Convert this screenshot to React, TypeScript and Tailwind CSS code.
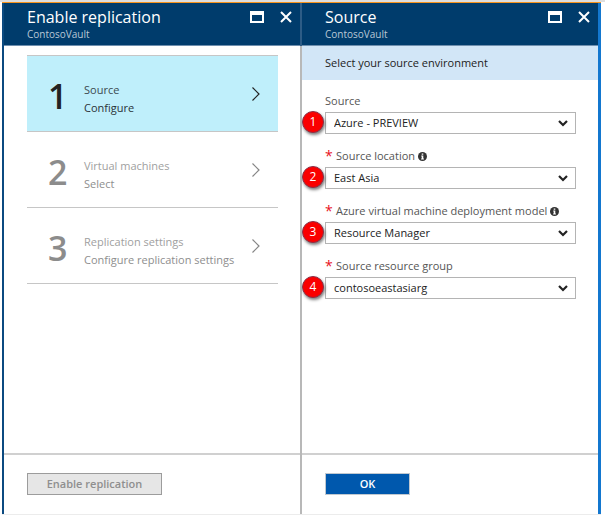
import type { ReactNode } from "react";

type Step = { number: number; title: string; detail: string; active?: boolean };
type Field = { id: string; label: string; value: string; required?: boolean; info?: boolean };

const steps: Step[] = [
  { number: 1, title: "Source", detail: "Configure", active: true },
  { number: 2, title: "Virtual machines", detail: "Select" },
  { number: 3, title: "Replication settings", detail: "Configure replication settings" },
];

const fields: Field[] = [
  { id: "source", label: "Source", value: "Azure - PREVIEW" },
  { id: "location", label: "Source location", value: "East Asia", required: true, info: true },
  {
    id: "model",
    label: "Azure virtual machine deployment model",
    value: "Resource Manager",
    required: true,
    info: true,
  },
  { id: "group", label: "Source resource group", value: "contosoeastasiarg", required: true },
];

function BladeHeader({ title }: { title: string }) {
  return (
    <header className="flex h-[43px] items-start justify-between border-b border-[#6f8fae] bg-[#003c6c] pr-2 pl-[23px]">
      <div className="pt-1">
        <h2 className="text-base leading-5 text-white">{title}</h2>
        <p className="text-[10px] leading-[14px] text-[#b9c8d6]">ContosoVault</p>
      </div>
      <div className="flex items-center gap-4 pt-2">
        <button type="button" aria-label="Maximize">
          <svg width="14" height="12" viewBox="0 0 14 12" className="block">
            <path d="M0 0h14v12H0zM2 4v6h10V4z" fill="#fff" fillRule="evenodd" />
          </svg>
        </button>
        <button type="button" aria-label="Close">
          <svg width="12" height="12" viewBox="0 0 12 12" className="block">
            <path d="M1 1l10 10M11 1L1 11" stroke="#fff" strokeWidth="2" />
          </svg>
        </button>
      </div>
    </header>
  );
}

function BladeFooter({ children }: { children: ReactNode }) {
  return (
    <footer className="mt-auto h-[61px] border-t-2 border-t-[#d0d0d0] pt-[18px] pl-[23px]">
      {children}
    </footer>
  );
}

function StepRow({ step }: { step: Step }) {
  return (
    <li className="border-b border-[#c6c6c6]">
      <button
        type="button"
        className={`flex h-[75px] w-full items-center pr-[18px] pl-[21px] text-left ${
          step.active ? "bg-[#bfeffb] text-[#3c4a50]" : "text-[#a0a0a0]"
        }`}
      >
        <span
          className={`w-9 pt-1 text-[34px] leading-10 font-semibold ${
            step.active ? "text-[#222222]" : "text-[#8c8c8c]"
          }`}
        >
          {step.number}
        </span>
        <span className="flex-1 pt-[10px] text-[11px] leading-[18px]">
          <span className="block">{step.title}</span>
          <span className={`block ${step.active ? "text-[#2a3438]" : "text-[#8e8e8e]"}`}>
            {step.detail}
          </span>
        </span>
        <svg width="8" height="14" viewBox="0 0 8 14" fill="none">
          <path
            d="M0.5 0.5L7 7L0.5 13.5"
            stroke={step.active ? "#222" : "#858585"}
            strokeWidth="1.2"
          />
        </svg>
      </button>
    </li>
  );
}

function InfoIcon() {
  return (
    <svg width="9" height="9" viewBox="0 0 9 9" role="img" aria-label="Information">
      <circle cx="4.5" cy="4.5" r="4.5" fill="#333" />
      <path d="M3.7 1.4h1.6v1.3H3.7zM3.2 3.5h2.1v3h.6v.9H3.1v-.9h.6V4.4h-.5z" fill="#fff" />
    </svg>
  );
}

function SelectField({ field, badge }: { field: Field; badge: number }) {
  return (
    <div>
      <div className="flex h-4 items-center gap-[3px] text-[11px] text-[#555555]">
        <label htmlFor={field.id} className="flex items-center gap-[3px]">
          {field.required && <span className="w-2 text-sm leading-4 text-[#e81123]">*</span>}
          {field.label}
        </label>
        {field.info && <InfoIcon />}
      </div>
      <div className="relative mt-[3px]">
        <select
          id={field.id}
          className="block h-[22px] w-full appearance-none border border-[#b4b4b4] bg-white pl-2 text-[11px] text-[#222222]"
        >
          <option>{field.value}</option>
        </select>
        <svg
          width="10"
          height="7"
          viewBox="0 0 10 7"
          fill="none"
          className="pointer-events-none absolute top-2 right-2"
        >
          <path d="M1 1L5 5L9 1" stroke="#222" strokeWidth="2.2" />
        </svg>
        <span className="absolute -top-px -left-[23px] flex size-[22px] items-center justify-center rounded-full border border-[#8d3048] bg-[#fa0000] text-[12px] leading-4 text-white shadow-[1px_2px_3px_rgba(0,0,0,0.5)]">
          {badge}
        </span>
      </div>
    </div>
  );
}

export default function App() {
  return (
    <div className="flex min-h-screen flex-col bg-white pb-[5px] font-['Open_Sans','Noto_Sans',sans-serif]">
      <div className="h-0.5 bg-[#dedede]" />
      <div className="mr-1 ml-0.5 flex flex-1 flex-col border-t border-b border-t-[#f7941d] border-b-[#ececec]">
        <main className="grid flex-1 grid-cols-[296fr_298fr] border-r-[3px] border-l-2 border-r-[#1377cf] border-l-[#0b4a80]">
          <section className="flex flex-col">
            <BladeHeader title="Enable replication" />
            <ol className="mt-[9px] mr-[22px] ml-[23px] border-t border-[#c6c6c6]">
              {steps.map((step) => (
                <StepRow key={step.number} step={step} />
              ))}
            </ol>
            <BladeFooter>
              <button
                type="button"
                disabled
                className="block h-[22px] w-[135px] border border-[#9c9c9c] bg-[#e6e6e6] text-[11px] font-semibold text-[#8f8f8f]"
              >
                Enable replication
              </button>
            </BladeFooter>
          </section>
          <section className="flex flex-col">
            <div className="border-l-2 border-[#2d5c86]">
              <BladeHeader title="Source" />
            </div>
            <div className="flex flex-1 flex-col border-l-2 border-[#b8b8b8]">
              <p className="h-[34px] bg-[#d2e6f7] pl-[23px] text-[11px] leading-[34px] text-[#222222]">
                Select your source environment
              </p>
              <form className="flex flex-col gap-[14px] pt-[13px] pr-[22px] pl-[23px]">
                {fields.map((field, index) => (
                  <SelectField key={field.id} field={field} badge={index + 1} />
                ))}
              </form>
              <BladeFooter>
                <button
                  type="button"
                  className="block h-[22px] w-[85px] border border-[#c0c8d0] bg-[#0058ad] text-[11px] font-semibold text-white"
                >
                  OK
                </button>
              </BladeFooter>
            </div>
          </section>
        </main>
      </div>
    </div>
  );
}
